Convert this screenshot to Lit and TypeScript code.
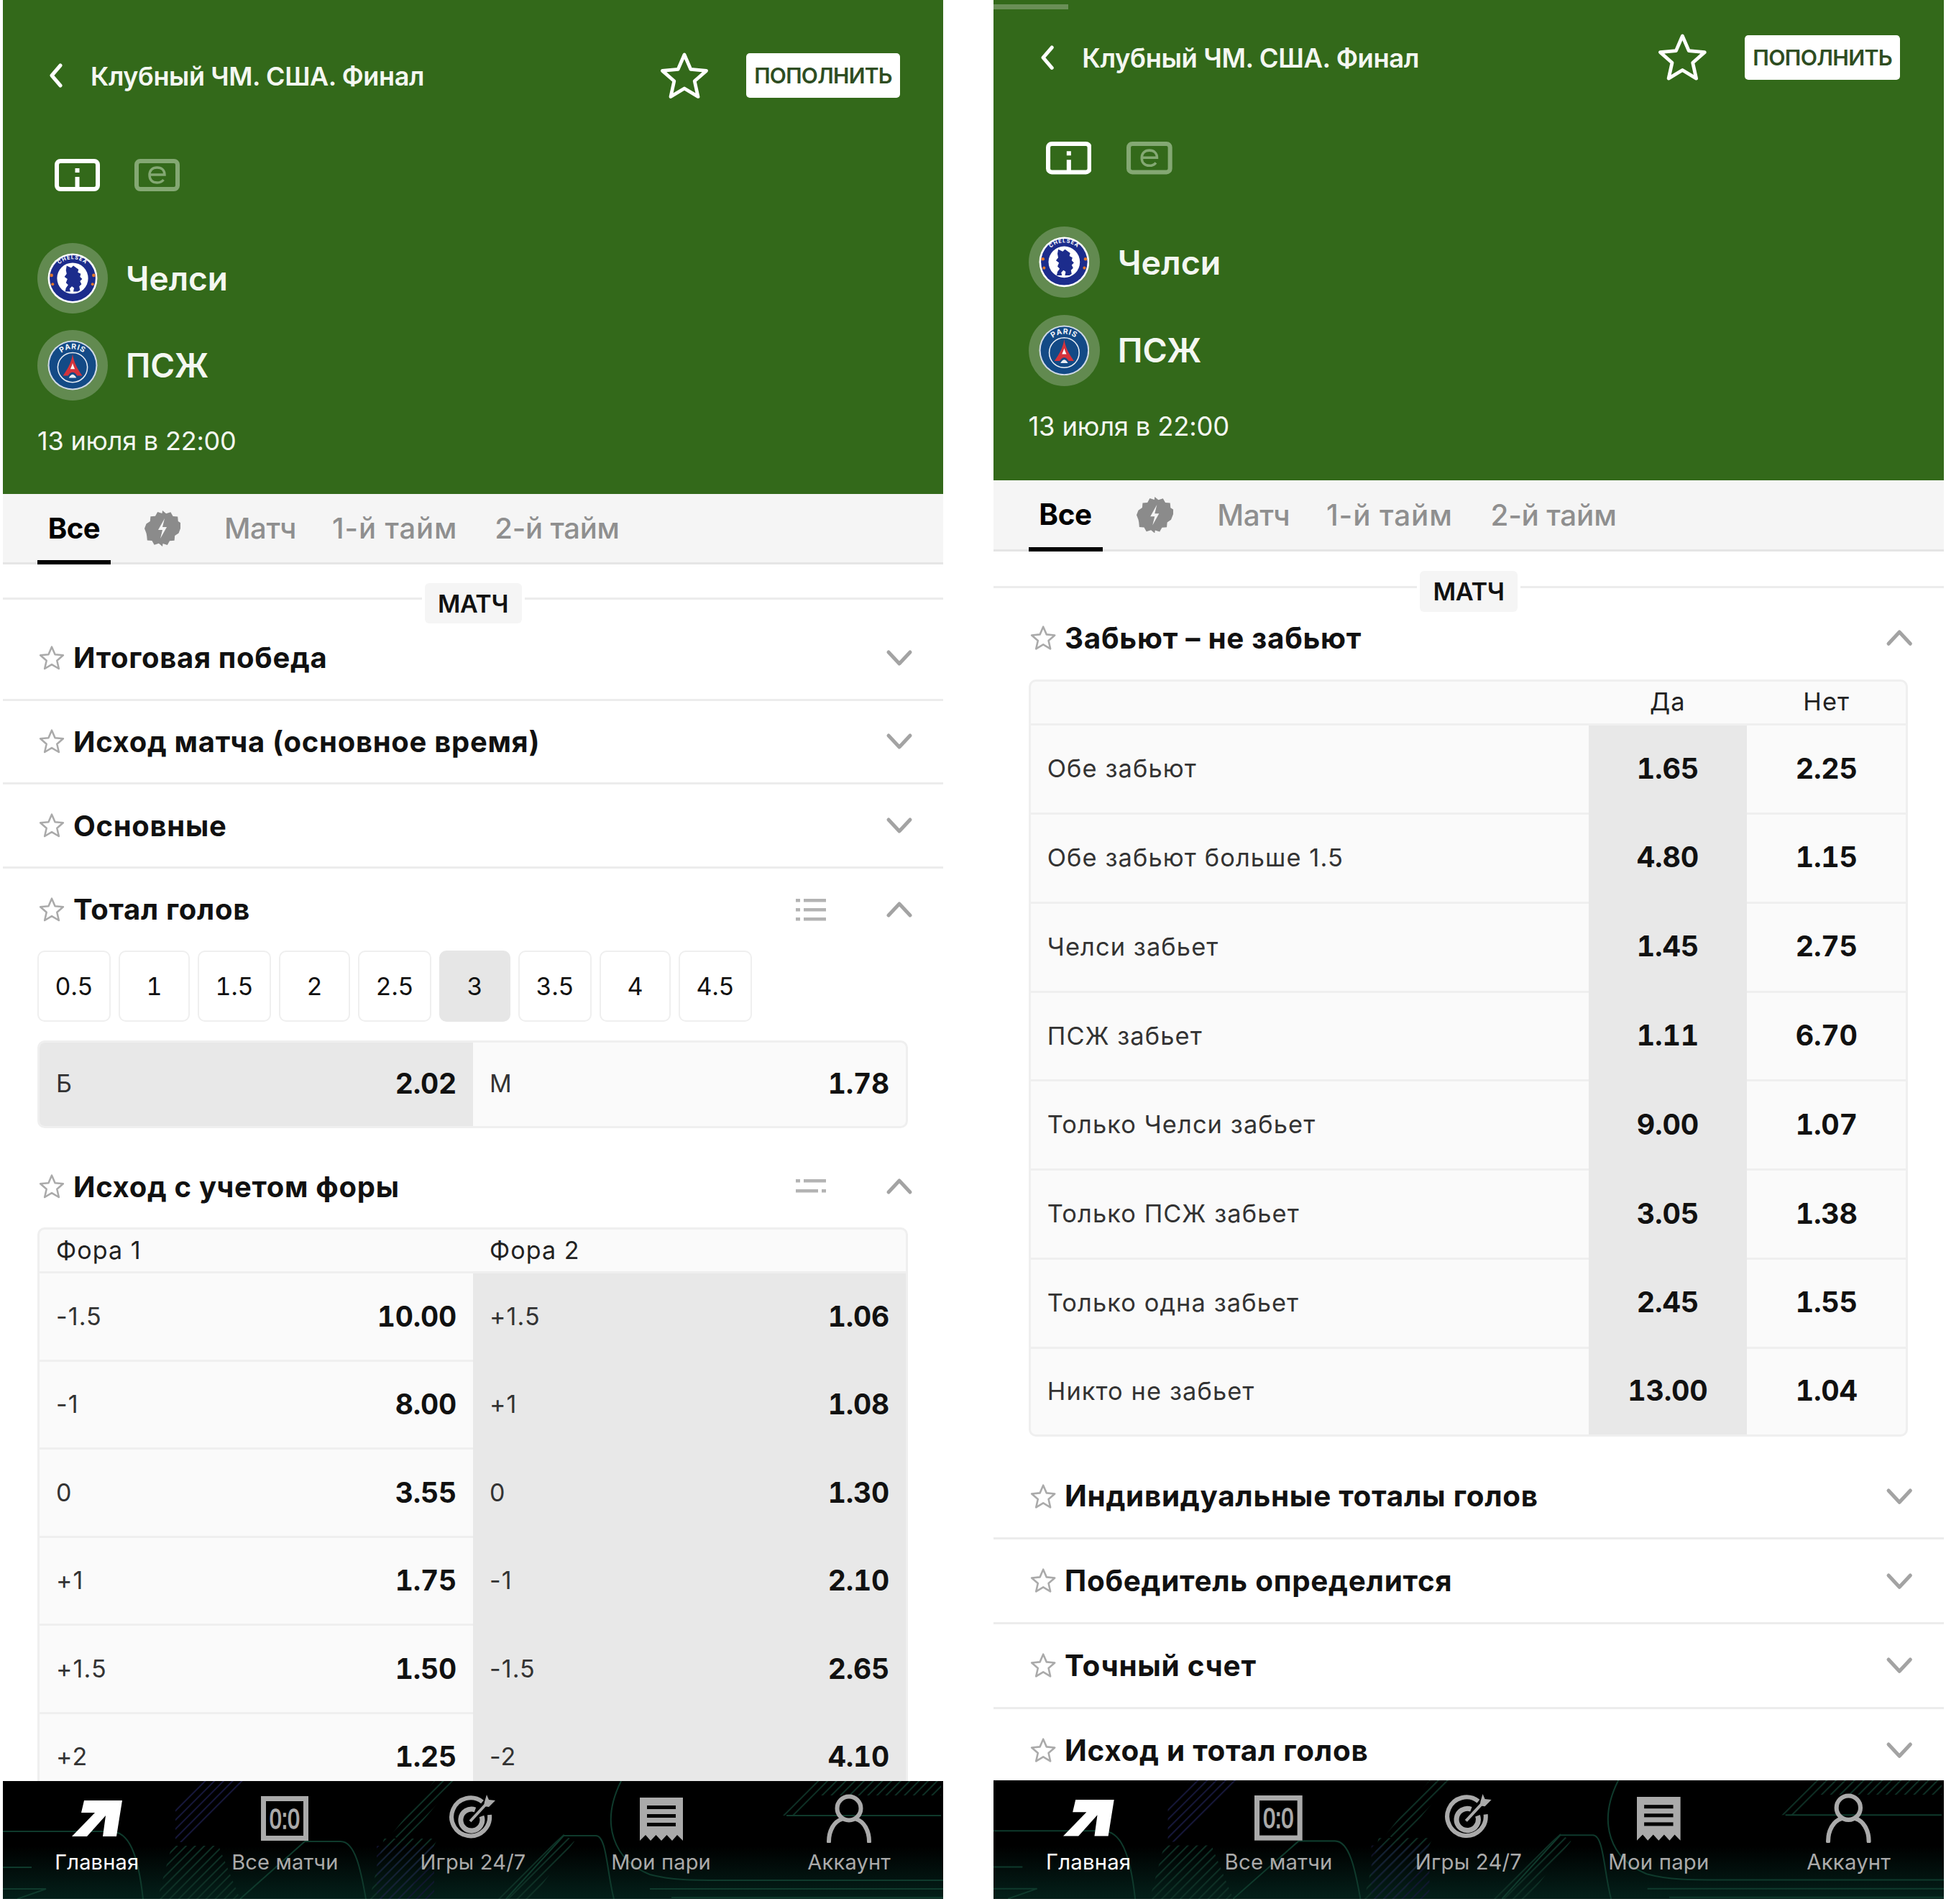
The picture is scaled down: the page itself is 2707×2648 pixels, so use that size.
import { LitElement, html, css, svg } from "lit";
import { customElement } from "lit/decorators.js";

const star = (w: number, cls = "") => html`<svg class=${cls} width=${w} height=${w} viewBox="0 0 34 34" fill="none" stroke="currentColor" stroke-width="2.4" stroke-linejoin="round"><path d="M17 2.5l4.3 10 10.7 1-8.1 7.1 2.4 10.6L17 25.6l-9.3 5.6 2.4-10.600L2 13.500l10.700-1z"/></svg>`;

const chevron = (up: boolean) => html`<svg class="chev" width="38" height="24" viewBox="0 0 38 24" fill="none" stroke="#a3a3a3" stroke-width="5" stroke-linecap="round" stroke-linejoin="round"><path d=${up ? "M4 20L19 4l15 16" : "M4 4l15 16L34 4"}/></svg>`;

const listIcon = html`<svg class="list" width="42" height="32" viewBox="0 0 42 32" fill="#b3b3b3"><rect x="0" y="1" width="6" height="4.5"/><rect x="11" y="1" width="31" height="4.5"/><rect x="0" y="14" width="6" height="4.5"/><rect x="11" y="14" width="31" height="4.5"/><rect x="0" y="27" width="6" height="4.5"/><rect x="11" y="27" width="31" height="4.5"/></svg>`;

const filterIcon = html`<svg class="list" width="42" height="32" viewBox="0 0 42 32" fill="#b3b3b3"><rect x="0" y="6" width="6" height="4.5"/><rect x="11" y="6" width="31" height="4.5"/><rect x="0" y="20" width="31" height="4.5"/><rect x="36" y="20" width="6" height="4.5"/></svg>`;

const chelsea = svg`<svg width="70" height="70" viewBox="0 0 68 68">
  <defs><path id="che-arc" d="M8 34a26 26 0 0 1 52 0"/></defs>
  <circle cx="34" cy="34" r="33.5" fill="#fff"/>
  <circle cx="34" cy="34" r="31" fill="#1c2c8c"/>
  <circle cx="34" cy="34" r="21" fill="#fff"/>
  <circle cx="5.500" cy="30" r="2.200" fill="#e2762c"/><circle cx="62.500" cy="30" r="2.200" fill="#e2762c"/>
  <circle cx="7" cy="42" r="2" fill="#e2762c"/><circle cx="61" cy="42" r="2" fill="#e2762c"/>
  <path d="M26 17l6 3 3-3 4 3 3 2-1 4 4 2-1 4 3 3-3 3 2 4-3 3 1 5-3 2h-6l1-5-3-2-3 3 1 4h-7l1-5 3-4-3-3 2-5-4-3 3-4-1-5z" fill="#1c2c8c"/>
  <text font-family="Inter, sans-serif" font-size="7" font-weight="700" fill="#fff" text-anchor="middle" letter-spacing="1"><textPath href="#che-arc" startOffset="50%">CHELSEA</textPath></text>
</svg>`;

const psg = svg`<svg width="70" height="70" viewBox="0 0 68 68">
  <defs><path id="psg-arc" d="M10 36a24 24 0 0 1 48 0"/></defs>
  <circle cx="34" cy="34" r="33.5" fill="#cfd9e6"/>
  <circle cx="34" cy="34" r="31.5" fill="#134a86"/>
  <circle cx="34" cy="37" r="20" fill="none" stroke="#e9eef5" stroke-width="1.500"/>
  <text font-family="Inter, sans-serif" font-size="10" font-weight="700" fill="#f2f5f9" text-anchor="middle" letter-spacing=".8"><textPath href="#psg-arc" startOffset="50%">PARIS</textPath></text>
  <path d="M34 19c1.500 11 6 19 13 29h-7c-2-3-3.500-4.500-6-4.500s-4 1.500-6 4.500h-7c7-10 11.500-18 13-29z" fill="#d4333c"/>
  <path d="M34 31c.8 3 1.800 5.500 3 8h-6c1.200-2.500 2.200-5 3-8z" fill="#fff"/>
  <path d="M29 51c1.500-3 3.500-4.500 5-4.500s3.500 1.500 5 4.500z" fill="#e9eef5"/>
</svg>`;

const tabBadge = html`<svg width="50" height="50" viewBox="0 0 50 50">
  <path fill="#8b8b8b" d="M25 0l5.100 4.200 6.300-2 3.200 5.800 6.600.5.600 6.600 5.700 3.300L50 25l-2.500 6.500-5.300 3.600-.6 6.600-6.600.5-3.200 5.800-6.300-2L25 50l-5.100-4.200-6.300 2-3.200-5.800-6.600-.5-.6-6.600L2.500 31.500 0 25l2.500-6.500 5.300-3.600.6-6.600 6.600-.5 3.200-5.800 6.300 2z"/>
  <path fill="#f5f5f5" d="M28 11l-9 16h6l-3 12 9-16h-6z"/>
</svg>`;

const navIcons = [
  html`<svg width="70" height="50" viewBox="0 0 70 50" fill="#fff"><path d="M17 0h53l-8 50H43l4-29-26 29H0l32-33H13z"/></svg>`,
  html`<svg width="66" height="62" viewBox="0 0 66 62"><rect x="3.500" y="3.500" width="59" height="55" fill="none" stroke="#aaa" stroke-width="7"/><text x="33" y="45" font-family="'Liberation Sans', sans-serif" font-size="39" fill="#aaa" stroke="#aaa" stroke-width="1.500" text-anchor="middle" textLength="42" lengthAdjust="spacingAndGlyphs">0:0</text></svg>`,
  html`<svg width="68" height="68" viewBox="0 0 68 68" fill="none" stroke="#aaa"><path d="M47 11A26.500 26.500 0 1 0 57 29" stroke-width="6"/><path d="M37 22a15 15 0 1 0 9 9" stroke-width="7"/><path d="M30 38L55 11" stroke-width="4"/><path d="M50 11l3-10 3 7 9 1-9 9-7-1z" fill="#aaa" stroke="none"/></svg>`,
  html`<svg width="60" height="62" viewBox="0 0 60 62"><path fill="#aaa" d="M0 2h60v60l-8-8-7 8-7.500-8-7.500 8-7.500-8-7.500 8-7-8-8 8z"/><rect x="10" y="13" width="40" height="5" fill="#050505"/><rect x="10" y="25" width="40" height="5" fill="#050505"/><rect x="10" y="37" width="40" height="5" fill="#050505"/></svg>`,
  html`<svg width="62" height="68" viewBox="0 0 62 68" fill="none" stroke="#aaa" stroke-width="6"><circle cx="31" cy="20" r="16.500"/><path d="M3 66c0-16 8-28 18-31M59 66c0-16-8-28-18-31" stroke-linecap="round"/></svg>`,
];

const navBg = svg`<svg class="nav-bg" viewBox="0 0 1308 164" preserveAspectRatio="none">
  <defs>
    <pattern id="hatch" width="9" height="9" patternUnits="userSpaceOnUse" patternTransform="rotate(45)"><rect width="2" height="9" fill="#0e3025"/></pattern>
    <pattern id="hatch2" width="9" height="9" patternUnits="userSpaceOnUse" patternTransform="rotate(45)"><rect width="2" height="9" fill="#16173a"/></pattern>
    <linearGradient id="fade" x1="0" y1="0" x2="0" y2="1"><stop offset=".55" stop-color="#000"/><stop offset="1" stop-color="#04201a"/></linearGradient>
  </defs>
  <rect width="1308" height="164" fill="url(#fade)"/>
  <path d="M1078 48L1130 0h175v20h-170l-30 28z" fill="url(#hatch)"/>
  <path d="M235 90h65l30 74H215zM530 80h75l-45 84H510z" fill="url(#hatch)"/>
  <path d="M270 0l-30 40v45h12L340 0z" fill="url(#hatch2)"/>
  <path d="M520 90h80v74h-80z" fill="url(#hatch2)" opacity=".7"/>
  <path d="M600 0l-60 75 20 10 70-85zM680 164l100-90 15 10-60 80z" fill="url(#hatch)"/>
  <g fill="none" stroke="#0f3a2c" stroke-width="2">
    <path d="M0 70h150c25 0 38 30 45 94"/><path d="M0 150h60L20 164"/>
    <path d="M330 164l90-80h50c20 0 28 40 35 80"/>
    <path d="M860 0c-30 60-10 110 40 130 30 8 60 8 100 8h308"/><path d="M900 150h408M930 162h378"/>
    <path d="M700 164l80-88h45c15 0 15 50 25 88"/>
    <path d="M1090 48h215"/><path d="M0 120h40"/>
  </g>
</svg>`;

const navItems = ["Главная", "Все матчи", "Игры 24/7", "Мои пари", "Аккаунт"];

const fora = [
  ["-1.5", "10.00", "+1.5", "1.06"],
  ["-1", "8.00", "+1", "1.08"],
  ["0", "3.55", "0", "1.30"],
  ["+1", "1.75", "-1", "2.10"],
  ["+1.5", "1.50", "-1.5", "2.65"],
  ["+2", "1.25", "-2", "4.10"],
];

const scorers = [
  ["Обе забьют", "1.65", "2.25"],
  ["Обе забьют больше 1.5", "4.80", "1.15"],
  ["Челси забьет", "1.45", "2.75"],
  ["ПСЖ забьет", "1.11", "6.70"],
  ["Только Челси забьет", "9.00", "1.07"],
  ["Только ПСЖ забьет", "3.05", "1.38"],
  ["Только одна забьет", "2.45", "1.55"],
  ["Никто не забьет", "13.00", "1.04"],
];

const totals = ["0.5", "1", "1.5", "2", "2.5", "3", "3.5", "4", "4.5"];

@customElement("app-root")
export class AppRoot extends LitElement {
  static styles = css`
    :host {
      display: flex;
      gap: 70px;
      width: 2707px;
      height: 2648px;
      padding-left: 4px;
      box-sizing: border-box;
      background: #fff;
      font-family: Inter, "Noto Sans", sans-serif;
      color: #111;
    }
    .phone {
      width: 1308px;
      height: 2641px;
      display: flex;
      flex-direction: column;
      overflow: hidden;
      background: #fff;
      flex: none;
    }
    .phone.second {
      zoom: 1.0107;
      height: 2613px;
    }

    .top {
      background: #33691a;
      color: #f4f7f1;
      padding: 74px 60px 52px 48px;
      flex: none;
      position: relative;
    }
    .second .top { padding-top: 48px; }
    .loader {
      position: absolute;
      left: 0;
      top: 6px;
      width: 103px;
      height: 7px;
      background: #6a8f57;
    }
    .bar {
      display: flex;
      align-items: center;
      height: 62px;
    }
    .back { margin: 0 36px 0 14px; }
    .bar-title {
      font-size: 36px;
      font-weight: 600;
      letter-spacing: -0.4px;
      flex: 1;
      padding-top: 2px;
    }
    .big-star { margin-right: 52px; color: #fff; }
    .deposit {
      width: 214px;
      height: 62px;
      border-radius: 5px;
      background: #fff;
      color: #2e4d22;
      display: flex;
      align-items: center;
      justify-content: center;
      font-size: 30px;
      font-weight: 600;
      letter-spacing: -0.7px;
    }
    .modes {
      display: flex;
      gap: 48px;
      margin: 85px 0 72px 24px;
    }
    .team {
      display: flex;
      align-items: center;
      gap: 25px;
      margin-bottom: 23px;
      font-size: 46px;
      font-weight: 600;
    }
    .crest {
      width: 98px;
      height: 98px;
      border-radius: 50%;
      background: #628a50;
      display: flex;
      align-items: center;
      justify-content: center;
    }
    .date {
      margin-top: 34px;
      font-size: 36px;
      line-height: 44px;
      letter-spacing: -0.2px;
    }

    .tabs {
      height: 98px;
      box-sizing: border-box;
      flex: none;
      background: #f5f5f5;
      border-bottom: 3px solid #e5e5e5;
      display: flex;
      align-items: center;
      padding-left: 48px;
      font-size: 40px;
      font-weight: 500;
      letter-spacing: -0.4px;
      color: #8f8f8f;
    }
    .tab { height: 98px; display: flex; align-items: center; }
    .tab.on {
      width: 102px;
      box-sizing: border-box;
      justify-content: center;
      color: #000;
      font-weight: 700;
      border-bottom: 6px solid #000;
      padding-top: 2px;
      align-self: flex-start;
    }
    .tabs svg { margin: 0 61px 0 47px; }
    .tab.t1 { margin-right: 50px; }
    .tab.t2 { margin-right: 52px; letter-spacing: 0.9px; }
    .tab.t3 { letter-spacing: -0.2px; }

    .content { flex: 1; min-height: 0; overflow: hidden; }
    .sep {
      display: flex;
      align-items: flex-start;
      gap: 4px;
      margin: 26px 0 -9px;
      height: 56px;
    }
    .second .sep { margin: 27px 0 -21px; }
    .sep i { flex: 1; height: 3px; margin-top: 20px; background: #ececec; }
    .sep b {
      width: 135px;
      height: 56px;
      display: flex;
      align-items: center;
      justify-content: center;
      background: #f5f5f5;
      border-radius: 6px;
      font-size: 34px;
      font-weight: 600;
      letter-spacing: -0.4px;
      position: relative;
      box-sizing: border-box;
    }

    .market { border-bottom: 3px solid #ececec; }
    .market.open { border-bottom: none; padding-bottom: 25px; }
    .head {
      height: 113.67px;
      display: flex;
      align-items: center;
      padding: 0 42px 0 50px;
      color: #aaa;
    }
    .head span {
      flex: 1;
      margin-left: 12px;
      color: #111;
      font-size: 40px;
      font-weight: 700;
      letter-spacing: 0.7px;
    }
    .list { margin-right: 83px; }

    .chips { display: flex; gap: 11px; padding: 0 48px; margin-bottom: 26px; }
    .chip {
      width: 99px;
      height: 99px;
      box-sizing: border-box;
      border: 2px solid #efefef;
      border-radius: 10px;
      display: flex;
      align-items: center;
      justify-content: center;
      font-size: 34px;
      font-variant-numeric: tabular-nums;
    }
    .chip.on { background: #e6e6e6; border-color: #e6e6e6; }
    .chip.wide { width: 102px; }

    .box {
      margin: 0 49px 0 48px;
      border: 3px solid #efefef;
      border-radius: 10px;
      background: #fafafa;
      overflow: hidden;
    }
    .two { display: grid; grid-template-columns: 603px 1fr; }
    .cell {
      height: 122.5px;
      box-sizing: border-box;
      display: flex;
      align-items: center;
      justify-content: space-between;
      padding: 0 23px 2px;
      font-size: 34px;
      letter-spacing: 1.1px;
      color: #333;
      border-bottom: 3px solid #efefef;
    }
    .cell b {
      font-size: 39px;
      font-weight: 700;
      color: #111;
      letter-spacing: -0.2px;
      font-variant-numeric: tabular-nums;
    }
    .cell.sel { background: #e8e8e8; border-bottom-color: #e8e8e8; }
    .cell.hd { height: 61px; color: #222; border-bottom: 3px solid #efefef; }
    .total .cell { height: 116px; border-bottom: none; padding-bottom: 3px; }

    .three { display: grid; grid-template-columns: 768px 218px 1fr; }
    .three .cell.mid { justify-content: center; padding: 0 0 2px; }
    .three .cell.end { border-bottom: none; height: 118px; }

    .nav {
      flex: none;
      height: 164px;
      background: #000;
      position: relative;
      display: grid;
      grid-template-columns: repeat(5, 1fr);
      overflow: hidden;
    }
    .second .nav { height: 163px; }
    .nav-bg { position: absolute; inset: 0; width: 100%; height: 100%; }
    .nav-item {
      position: relative;
      display: flex;
      flex-direction: column;
      align-items: center;
      color: #aaa;
      font-size: 29px;
      letter-spacing: 0.2px;
    }
    .nav-item.on { color: #fff; }
    .nav-icon {
      height: 90px;
      margin-top: 7px;
      display: flex;
      align-items: center;
      justify-content: center;
    }
    .nav-label { margin-top: -2px; }
  `;

  renderTop(loader: boolean) {
    return html`
      <div class="top">
        ${loader ? html`<div class="loader"></div>` : ""}
        <div class="bar">
          <svg class="back" width="24" height="34" viewBox="0 0 24 34" fill="none" stroke="#fff" stroke-width="5" stroke-linecap="round" stroke-linejoin="round"><path d="M18 3L6 17l12 14"/></svg>
          <div class="bar-title">Клубный ЧМ. США. Финал</div>
          <svg class="big-star" width="68" height="66" viewBox="0 0 34 33" fill="none" stroke="currentColor" stroke-width="2.400" stroke-linejoin="round"><path d="M17 2l4.400 10.200 10.900 1-8.200 7.200 2.400 10.800L17 25.500l-9.500 5.700 2.400-10.800L1.700 13.200l10.900-1z"/></svg>
          <div class="deposit">ПОПОЛНИТЬ</div>
        </div>
        <div class="modes">
          <svg width="63" height="45" viewBox="0 0 63 45" fill="none" stroke="#fff" stroke-width="6"><rect x="3" y="3" width="57" height="39" rx="5"/><path d="M31.500 13v6M31.500 25v17"/></svg>
          <svg width="63" height="45" viewBox="0 0 63 45" fill="none" stroke="#84a873" stroke-width="6"><rect x="3" y="3" width="57" height="39" rx="5"/><path d="M21 22h21c0-6-4-10-10.500-10S21 16 21 22.500 25 33 31.500 33c4 0 7-1.500 9-4" stroke-width="3.500"/></svg>
        </div>
        <div class="team"><div class="crest">${chelsea}</div>Челси</div>
        <div class="team"><div class="crest">${psg}</div>ПСЖ</div>
        <div class="date">13 июля в 22:00</div>
      </div>
      <div class="tabs">
        <div class="tab on">Все</div>
        ${tabBadge}
        <div class="tab t1">Матч</div>
        <div class="tab t2">1-й тайм</div>
        <div class="tab t3">2-й тайм</div>
      </div>`;
  }

  renderSep() {
    return html`<div class="sep"><i></i><b>МАТЧ</b><i></i></div>`;
  }

  renderHead(title: string, up = false, extra: unknown = "") {
    return html`<div class="head">${star(36)}<span>${title}</span>${extra}${chevron(up)}</div>`;
  }

  renderClosed(title: string) {
    return html`<div class="market">${this.renderHead(title)}</div>`;
  }

  renderNav() {
    return html`<div class="nav">
      ${navBg}
      ${navItems.map((label, i) => html`
        <div class="nav-item ${i === 0 ? "on" : ""}">
          <div class="nav-icon">${navIcons[i]}</div>
          <div class="nav-label">${label}</div>
        </div>`)}
    </div>`;
  }

  render() {
    return html`
      <div class="phone">
        ${this.renderTop(false)}
        <div class="content">
          ${this.renderSep()}
          ${this.renderClosed("Итоговая победа")}
          ${this.renderClosed("Исход матча (основное время)")}
          ${this.renderClosed("Основные")}
          <div class="market open">
            ${this.renderHead("Тотал голов", true, listIcon)}
            <div class="chips">
              ${totals.map(t => html`<div class="chip ${t === "3" ? "on" : ""} ${t.length > 1 ? "wide" : ""}">${t}</div>`)}
            </div>
            <div class="box two total">
              <div class="cell sel">Б<b>2.02</b></div>
              <div class="cell">М<b>1.78</b></div>
            </div>
          </div>
          <div class="market open">
            ${this.renderHead("Исход с учетом форы", true, filterIcon)}
            <div class="box two">
              <div class="cell hd">Фора 1</div>
              <div class="cell hd">Фора 2</div>
              ${fora.map(r => html`
                <div class="cell">${r[0]}<b>${r[1]}</b></div>
                <div class="cell sel">${r[2]}<b>${r[3]}</b></div>`)}
            </div>
          </div>
        </div>
        ${this.renderNav()}
      </div>

      <div class="phone second">
        ${this.renderTop(true)}
        <div class="content">
          ${this.renderSep()}
          <div class="market open">
            ${this.renderHead("Забьют – не забьют", true)}
            <div class="box three">
              <div class="cell hd"></div>
              <div class="cell hd mid">Да</div>
              <div class="cell hd mid">Нет</div>
              ${scorers.map((r, i) => {
                const end = i === scorers.length - 1 ? "end" : "";
                return html`
                  <div class="cell ${end}">${r[0]}</div>
                  <div class="cell mid sel ${end}"><b>${r[1]}</b></div>
                  <div class="cell mid ${end}"><b>${r[2]}</b></div>`;
              })}
            </div>
          </div>
          ${this.renderClosed("Индивидуальные тоталы голов")}
          ${this.renderClosed("Победитель определится")}
          ${this.renderClosed("Точный счет")}
          ${this.renderClosed("Исход и тотал голов")}
        </div>
        ${this.renderNav()}
      </div>
    `;
  }
}
